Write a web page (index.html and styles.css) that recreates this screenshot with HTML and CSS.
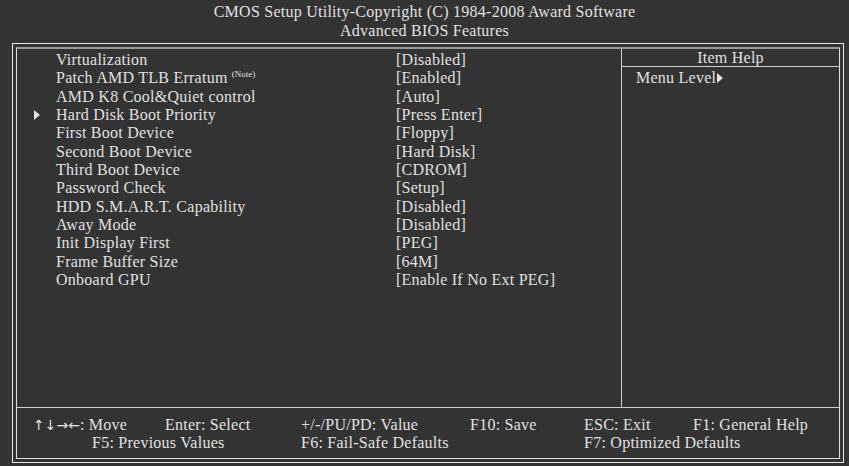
FILE: index.html
```html
<!DOCTYPE html>
<html lang="en">
<head>
    <meta charset="UTF-8">
    <title>CMOS Setup Utility - Advanced BIOS Features</title>
    <link rel="stylesheet" href="styles.css">
</head>
<body>

    <div class="title">
        <div>CMOS Setup Utility-Copyright (C) 1984-2008 Award Software</div>
        <div>Advanced BIOS Features</div>
    </div>

    <div class="frame">
        <div class="inner">
            <div class="main">
                <div class="items">
                    <div class="row"><span class="label">Virtualization</span><span class="value">[Disabled]</span></div>
                    <div class="row"><span class="label">Patch AMD TLB Erratum <sup class="note">(Note)</sup></span><span class="value">[Enabled]</span></div>
                    <div class="row"><span class="label">AMD K8 Cool&amp;Quiet control</span><span class="value">[Auto]</span></div>
                    <div class="row"><span class="arrow"></span><span class="label">Hard Disk Boot Priority</span><span class="value">[Press Enter]</span></div>
                    <div class="row"><span class="label">First Boot Device</span><span class="value">[Floppy]</span></div>
                    <div class="row"><span class="label">Second Boot Device</span><span class="value">[Hard Disk]</span></div>
                    <div class="row"><span class="label">Third Boot Device</span><span class="value">[CDROM]</span></div>
                    <div class="row"><span class="label">Password Check</span><span class="value">[Setup]</span></div>
                    <div class="row"><span class="label">HDD S.M.A.R.T. Capability</span><span class="value">[Disabled]</span></div>
                    <div class="row"><span class="label">Away Mode</span><span class="value">[Disabled]</span></div>
                    <div class="row"><span class="label">Init Display First</span><span class="value">[PEG]</span></div>
                    <div class="row"><span class="label">Frame Buffer Size</span><span class="value">[64M]</span></div>
                    <div class="row"><span class="label">Onboard GPU</span><span class="value">[Enable If No Ext PEG]</span></div>
                </div>
                <div class="help">
                    <div class="help-title">Item Help</div>
                    <div class="help-text">Menu Level<span class="level-arrow"></span></div>
                </div>
            </div>

            <div class="footer">
                <span><span class="keys">↑↓→←</span>: Move</span>
                <span>Enter: Select</span>
                <span>+/-/PU/PD: Value</span>
                <span>F10: Save</span>
                <span>ESC: Exit</span>
                <span>F1: General Help</span>
                <span class="f5">F5: Previous Values</span>
                <span class="f6">F6: Fail-Safe Defaults</span>
                <span class="f7">F7: Optimized Defaults</span>
            </div>
        </div>
    </div>

</body>
</html>
```

FILE: styles.css
```css
body {
    margin: 0;
    background-color: #333333;
    color: #e0e0e0;
    font-family: "Liberation Serif", "Times New Roman", serif;
    font-size: 16px;
    letter-spacing: 0.25px;
    width: 849px;
    height: 466px;
    overflow: hidden;
}
.title {
    text-align: center;
    line-height: 19px;
    padding-top: 2px;
    height: 41px;
}
.frame {
    margin: 0 5px 0 12px;
    border: 1px solid #e6e6e6;
    padding: 3px;
    height: 412px;
}
.inner {
    border: 1px solid #e0e0e0;
    border-top: 2px solid #9a9a9a;
    height: 409px;
    display: flex;
    flex-direction: column;
}
.main {
    display: flex;
    height: 358px;
    border-bottom: 1px solid #cfcfcf;
}
.items {
    width: 604px;
    border-right: 1px solid #cfcfcf;
    padding-top: 2px;
}
.row {
    display: flex;
    align-items: center;
    height: 18.33px;
    position: relative;
}
.label {
    width: 340px;
    padding-left: 39px;
}
.value {
    flex: 1;
}
.note {
    font-size: 9px;
    letter-spacing: 0;
    vertical-align: 6px;
}
.arrow {
    position: absolute;
    left: 17px;
    top: 4px;
    width: 0;
    height: 0;
    border-top: 5px solid transparent;
    border-bottom: 5px solid transparent;
    border-left: 6px solid #e0e0e0;
}
.help {
    flex: 1;
}
.help-title {
    text-align: center;
    height: 17px;
    line-height: 18px;
    border-bottom: 1px solid #cfcfcf;
}
.help-text {
    padding-left: 14px;
    line-height: 18px;
    margin-top: 2px;
}
.level-arrow {
    display: inline-block;
    width: 0;
    height: 0;
    border-top: 5px solid transparent;
    border-bottom: 5px solid transparent;
    border-left: 6px solid #e0e0e0;
    margin-left: 1px;
}
.footer {
    flex: 1;
    display: grid;
    grid-template-columns: 132px 136px 169px 114px 109px auto;
    grid-auto-rows: 18px;
    padding: 8px 0 0 16px;
}
.keys {
    font-family: "DejaVu Sans", sans-serif;
    font-size: 14px;
    letter-spacing: 0;
}
.f5 {
    grid-column: 1 / 3;
    padding-left: 59px;
}
.f6 {
    grid-column: 3 / 5;
}
.f7 {
    grid-column: 5 / 7;
}
```
